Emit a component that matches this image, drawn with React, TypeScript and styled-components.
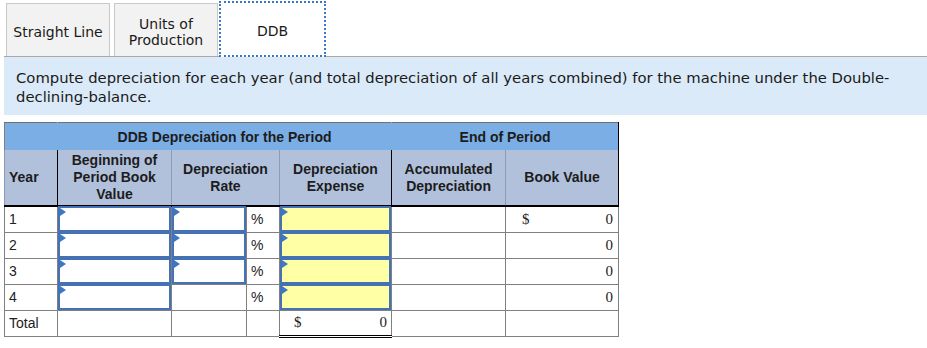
import React from "react";
import styled, { createGlobalStyle, css } from "styled-components";

const GlobalStyle = createGlobalStyle`
    body {
        margin: 0;
        background: #ffffff;
        font-family: "DejaVu Sans", Verdana, sans-serif;
        color: #1f1f1f;
    }
`;

const Page = styled.div`
    padding-left: 4px;
    width: 923px;
`;

const TabBar = styled.div`
    display: flex;
    align-items: flex-end;
    height: 57px;
    padding-left: 2px;
    box-sizing: border-box;
    border-bottom: 1px solid #a8a8a8;
`;

const Tab = styled.div<{ $active?: boolean }>`
    display: flex;
    align-items: center;
    justify-content: center;
    box-sizing: border-box;
    width: 104px;
    height: 53px;
    margin-right: 4px;
    padding-top: 3px;
    border: 1px solid #c8c8c8;
    border-bottom: none;
    background: #f2f2f2;
    font-size: 14px;
    line-height: 16px;
    text-align: center;
    color: #1a1a1a;

    ${(p) =>
        p.$active &&
        css`
            width: 107px;
            height: 56px;
            margin-left: -3px;
            margin-bottom: -1px;
            padding-top: 4px;
            background: #ffffff;
            border: 2px dotted #3c78c4;
        `}
`;

const Prompt = styled.div`
    background: #dbeaf8;
    padding: 11px 12px 9px 12px;
    font-size: 14.8px;
    line-height: 19px;
    color: #1a1a1a;
`;

const Table = styled.table`
    margin-top: 7px;
    border-collapse: collapse;
    table-layout: fixed;
    width: 614px;
    font-family: "Liberation Sans", Arial, sans-serif;
    font-size: 14px;
    color: #222222;
`;

const GroupHead = styled.th<{ $leftBlack?: boolean; $rightBlack?: boolean }>`
    height: 27px;
    padding: 0;
    background: #7aaee4;
    font-weight: bold;
    font-size: 14px;
    color: #1c1c1c;
    border-top: 1px solid #707070;
    border-left: 1px solid ${(p) => (p.$leftBlack ? "#000000" : "#808080")};
    border-right: 1px solid ${(p) => (p.$rightBlack ? "#000000" : "#7aaee4")};
`;

const ColHead = styled.th<{ $leftBlack?: boolean; $rightBlack?: boolean }>`
    height: 55px;
    padding: 0 4px;
    background: #b1c1dc;
    font-weight: bold;
    font-size: 14px;
    line-height: 17px;
    color: #1c1c1c;
    text-align: center;
    border-bottom: 2px solid #000000;
    border-left: 1px solid ${(p) => (p.$leftBlack ? "#000000" : "#8e9ab0")};
    border-right: 1px solid ${(p) => (p.$rightBlack ? "#000000" : "#8e9ab0")};
`;

const YearHead = styled(ColHead)`
    text-align: left;
    padding-left: 4px;
`;

const Row = styled.tr`
    height: 26px;
`;

const Cell = styled.td<{ $total?: boolean }>`
    padding: 0;
    border: 1px solid #808080;
    vertical-align: middle;

    ${(p) =>
        p.$total &&
        css`
            border-top: 1px solid #000000;
            border-bottom: 3px double #000000;
        `}
`;

const YearCell = styled(Cell)`
    padding-left: 4px;
`;

const PctCell = styled(Cell)`
    padding-left: 4px;
`;

const InputBox = styled.div<{ $yellow?: boolean }>`
    position: relative;
    box-sizing: border-box;
    height: 26px;
    margin: -1px 0;
    border: 2px solid #4472b4;
    background: ${(p) => (p.$yellow ? "#ffffa6" : "#ffffff")};

    &::before {
        content: "";
        position: absolute;
        top: 0;
        left: 0;
        border-left: 6px solid #3c78c8;
        border-top: 4px solid transparent;
        border-bottom: 4px solid transparent;
    }
`;

const Money = styled.div<{ $left: number; $right: number }>`
    display: flex;
    justify-content: space-between;
    padding: 0 ${(p) => p.$right}px 0 ${(p) => p.$left}px;
    font-family: "Liberation Serif", "Times New Roman", serif;
    font-size: 15px;
    color: #222222;
`;

const rows = [1, 2, 3, 4];

const App = () => {
    return (
        <Page>
            <GlobalStyle />
            <TabBar>
                <Tab>Straight Line</Tab>
                <Tab>
                    Units of
                    <br />
                    Production
                </Tab>
                <Tab $active>DDB</Tab>
            </TabBar>
            <Prompt>
                Compute depreciation for each year (and total depreciation of all
                years combined) for the machine under the Double-declining-balance.
            </Prompt>
            <Table>
                <colgroup>
                    <col style={{ width: 53 }} />
                    <col style={{ width: 114 }} />
                    <col style={{ width: 75 }} />
                    <col style={{ width: 33 }} />
                    <col style={{ width: 112 }} />
                    <col style={{ width: 114 }} />
                    <col style={{ width: 113 }} />
                </colgroup>
                <thead>
                    <tr>
                        <GroupHead />
                        <GroupHead colSpan={4} $leftBlack>
                            DDB Depreciation for the Period
                        </GroupHead>
                        <GroupHead colSpan={2} $leftBlack $rightBlack>
                            End of Period
                        </GroupHead>
                    </tr>
                    <tr>
                        <YearHead $rightBlack>Year</YearHead>
                        <ColHead $leftBlack>
                            Beginning of Period Book Value
                        </ColHead>
                        <ColHead colSpan={2}>Depreciation Rate</ColHead>
                        <ColHead $rightBlack>Depreciation Expense</ColHead>
                        <ColHead $leftBlack>Accumulated Depreciation</ColHead>
                        <ColHead $rightBlack>Book Value</ColHead>
                    </tr>
                </thead>
                <tbody>
                    {rows.map((n) => (
                        <Row key={n}>
                            <YearCell>{n}</YearCell>
                            <Cell>
                                <InputBox />
                            </Cell>
                            <Cell>{n < 4 && <InputBox />}</Cell>
                            <PctCell>%</PctCell>
                            <Cell>
                                <InputBox $yellow />
                            </Cell>
                            <Cell />
                            <Cell>
                                <Money $left={16} $right={5}>
                                    <span>{n === 1 ? "$" : ""}</span>
                                    <span>0</span>
                                </Money>
                            </Cell>
                        </Row>
                    ))}
                    <Row>
                        <YearCell>Total</YearCell>
                        <Cell />
                        <Cell />
                        <Cell />
                        <Cell $total>
                            <Money $left={14} $right={4}>
                                <span>$</span>
                                <span>0</span>
                            </Money>
                        </Cell>
                        <Cell />
                        <Cell />
                    </Row>
                </tbody>
            </Table>
        </Page>
    );
};

export default App;
